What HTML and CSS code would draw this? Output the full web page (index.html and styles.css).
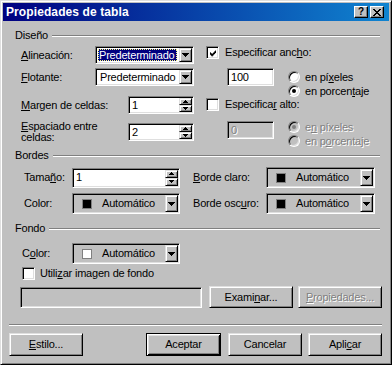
FILE: index.html
```html
<!DOCTYPE html>
<html lang="es">
<head>
<meta charset="utf-8">
<title>Propiedades de tabla</title>
<link rel="stylesheet" href="styles.css">
</head>
<body>
<div class="window">
  <div class="titlebar">
    <span class="title">Propiedades de tabla</span>
    <div class="tb-btns">
      <span class="tbtn help">?</span>
      <span class="tbtn"><svg width="8" height="7" viewBox="0 0 8 7"><path d="M0 0h2v1h1v1h2v-1h1v-1h2v1h-1v1h-1v1h-1v1h1v1h1v1h1v1h-2v-1h-1v-1h-2v1h-1v1h-2v-1h1v-1h1v-1h1v-1h-1v-1h-1v-1h-1z" fill="#000"/></svg></span>
    </div>
  </div>
  <div class="content">
    <div class="ghead"><span>Diseño</span><i class="rule"></i></div>
    <div class="design">
      <div class="lcol">
        <div class="row lrow r1">
          <span class="lbl-a"><u>A</u>lineación:</span>
          <div class="combo sunken w99"><span class="val sel">Predeterminado</span><span class="dd raised"><svg width="7" height="4" viewBox="0 0 7 4"><path d="M0 0H7V1H6V2H5V3H4V4H3V3H2V2H1V1H0Z"/></svg></span></div>
        </div>
        <div class="row lrow r2">
          <span class="lbl-a"><u>F</u>lotante:</span>
          <div class="combo sunken w99"><span class="val">Predeterminado</span><span class="dd raised"><svg width="7" height="4" viewBox="0 0 7 4"><path d="M0 0H7V1H6V2H5V3H4V4H3V3H2V2H1V1H0Z"/></svg></span></div>
        </div>
        <div class="row lrow r3">
          <span class="lbl-b"><u>M</u>argen de celdas:</span>
          <div class="spin sunken w66"><span class="val">1</span><span class="btns"><span class="raised"><svg width="5" height="3" viewBox="0 0 5 3"><path d="M2 0H3V1H4V2H5V3H0V2H1V1H2Z"/></svg></span><span class="raised"><svg width="5" height="3" viewBox="0 0 5 3"><path d="M0 0H5V1H4V2H3V3H2V2H1V1H0Z"/></svg></span></span></div>
        </div>
        <div class="row lrow r4">
          <span class="lbl-b two"><u>E</u>spaciado entre<br>celdas:</span>
          <div class="spin sunken w66"><span class="val">2</span><span class="btns"><span class="raised"><svg width="5" height="3" viewBox="0 0 5 3"><path d="M2 0H3V1H4V2H5V3H0V2H1V1H2Z"/></svg></span><span class="raised"><svg width="5" height="3" viewBox="0 0 5 3"><path d="M0 0H5V1H4V2H3V3H2V2H1V1H0Z"/></svg></span></span></div>
        </div>
      </div>
      <div class="rcol">
        <div class="cbrow cb1">
          <span class="chk sunken"><svg width="7" height="7" viewBox="0 0 7 7"><path d="M0 2h1v1h1v1h1v-1h1v-1h1v-1h1v-1h1v3h-1v1h-1v1h-1v1h-1v1h-1v-1h-1v-1h-1z"/></svg></span>
          <span>Especificar anc<u>h</u>o:</span>
        </div>
        <div class="wblock">
          <div class="numfield sunken">100</div>
          <div class="radios">
            <div class="rrow"><span class="radio"></span><span>en pí<u>x</u>eles</span></div>
            <div class="rrow"><span class="radio on"></span><span>en porcen<u>t</u>aje</span></div>
          </div>
        </div>
        <div class="cbrow">
          <span class="chk sunken"></span>
          <span>Especifica<u>r</u> alto:</span>
        </div>
        <div class="hblock">
          <div class="numfield sunken disabled"><span class="dis">0</span></div>
          <div class="radios r0">
            <div class="rrow"><span class="radio off on"></span><span class="dis">e<u>n</u> píxeles</span></div>
            <div class="rrow"><span class="radio off"></span><span class="dis">en p<u>o</u>rcentaje</span></div>
          </div>
        </div>
      </div>
    </div>

    <div class="ghead g-bordes"><span>Bordes</span><i class="rule"></i></div>
    <div class="borders">
      <div class="row brow b1">
        <span class="blbl">Tama<u>ñ</u>o:</span>
        <div class="spin sunken w108 tall"><span class="val">1</span><span class="btns"><span class="raised"><svg width="5" height="3" viewBox="0 0 5 3"><path d="M2 0H3V1H4V2H5V3H0V2H1V1H2Z"/></svg></span><span class="raised"><svg width="5" height="3" viewBox="0 0 5 3"><path d="M0 0H5V1H4V2H3V3H2V2H1V1H0Z"/></svg></span></span></div>
        <span class="blbl2"><u>B</u>orde claro:</span>
        <div class="combo sunken color w109 tall"><span class="val"><i class="swatch black"></i><span class="ctext">Automático</span></span><span class="dd raised"><svg width="7" height="4" viewBox="0 0 7 4"><path d="M0 0H7V1H6V2H5V3H4V4H3V3H2V2H1V1H0Z"/></svg></span></div>
      </div>
      <div class="row brow b2">
        <span class="blbl">Color:</span>
        <div class="combo sunken color w108 tall"><span class="val"><i class="swatch black"></i><span class="ctext">Automático</span></span><span class="dd raised"><svg width="7" height="4" viewBox="0 0 7 4"><path d="M0 0H7V1H6V2H5V3H4V4H3V3H2V2H1V1H0Z"/></svg></span></div>
        <span class="blbl2">Borde osc<u>u</u>ro:</span>
        <div class="combo sunken color w109 tall"><span class="val"><i class="swatch black"></i><span class="ctext">Automático</span></span><span class="dd raised"><svg width="7" height="4" viewBox="0 0 7 4"><path d="M0 0H7V1H6V2H5V3H4V4H3V3H2V2H1V1H0Z"/></svg></span></div>
      </div>
    </div>

    <div class="ghead g-fondo"><span>Fondo</span><i class="rule"></i></div>
    <div class="fondo">
      <div class="row frow1">
        <span class="flbl">C<u>o</u>lor:</span>
        <div class="combo sunken color w108 tall"><span class="val"><i class="swatch white"></i><span class="ctext">Automático</span></span><span class="dd raised"><svg width="7" height="4" viewBox="0 0 7 4"><path d="M0 0H7V1H6V2H5V3H4V4H3V3H2V2H1V1H0Z"/></svg></span></div>
      </div>
      <div class="row frow2">
        <span class="chk sunken"></span>
        <span>Utili<u>z</u>ar imagen de fondo</span>
      </div>
      <div class="row frow3">
        <div class="pathfield sunken"></div>
        <div class="btn raised b-exam">Exami<u>n</u>ar...</div>
        <div class="btn raised b-prop"><span class="dis"><u>P</u>ropiedades...</span></div>
      </div>
    </div>

    <div class="sep"></div>

    <div class="footer">
      <div class="btn raised fbtn"><span><u>E</u>stilo...</span></div>
      <div class="btn default fbtn b-ok">Aceptar</div>
      <div class="btn raised fbtn b-cancel">Cancelar</div>
      <div class="btn raised fbtn b-apply">Apli<u>c</u>ar</div>
    </div>
  </div>
</div>
</body>
</html>
```

FILE: styles.css
```css
* { box-sizing: border-box; }
html, body { margin: 0; padding: 0; }
body {
  width: 392px;
  height: 365px;
  overflow: hidden;
  background: #c0c0c0;
  font-family: "Liberation Sans", Arial, sans-serif;
  font-size: 11px;
  line-height: 13px;
  letter-spacing: -0.2px;
  color: #000;
}
u { text-decoration: underline; text-underline-offset: 1px; }

.window {
  width: 392px;
  height: 365px;
  background: #c0c0c0;
  border: 1px solid;
  border-color: #dfdfdf #000 #000 #dfdfdf;
  box-shadow: inset 1px 1px #fff, inset -1px -1px #808080;
  padding: 2px;
  display: flex;
  flex-direction: column;
}

.titlebar {
  height: 18px;
  flex: none;
  display: flex;
  align-items: center;
  justify-content: space-between;
  background: linear-gradient(to right, #000080, #1084d0);
  padding: 0 5px 0 3px;
}
.title { color: #fff; font-weight: bold; font-size: 12px; letter-spacing: 0.1px; }
.tb-btns { display: flex; gap: 2px; }
.tbtn {
  width: 14px;
  height: 12px;
  background: #c0c0c0;
  border: 1px solid;
  border-color: #fff #000 #000 #fff;
  box-shadow: inset -1px -1px #808080;
  display: flex;
  align-items: center;
  justify-content: center;
}
.tbtn.help { font-weight: bold; font-size: 10px; line-height: 10px; letter-spacing: 0; }

.content {
  flex: 1;
  padding: 8px 7px 0 6px;
  display: flex;
  flex-direction: column;
}

.ghead {
  display: flex;
  align-items: center;
  height: 13px;
  padding-left: 6px;
  margin-right: 2px;
  flex: none;
}
.rule {
  flex: 1;
  height: 2px;
  border-top: 1px solid #808080;
  border-bottom: 1px solid #fff;
  margin-left: 4px;
}

/* bevels */
.sunken {
  border: 1px solid;
  border-color: #808080 #fff #fff #808080;
  box-shadow: inset 1px 1px #000, inset -1px -1px #dfdfdf;
  background: #fff;
}
.raised {
  background: #c0c0c0;
  border: 1px solid;
  border-color: #dfdfdf #000 #000 #dfdfdf;
  box-shadow: inset 1px 1px #fff, inset -1px -1px #808080;
}

.row { display: flex; align-items: center; }

/* design */
.design {
  display: grid;
  grid-template-columns: 185px 1fr;
  padding-left: 12px;
  height: 101px;
  flex: none;
}
.lcol { display: flex; flex-direction: column; }
.lrow { height: 18px; }
.r1 { margin-top: 4px; }
.r2 { margin-top: 4px; }
.r3 { margin-top: 10px; }
.r4 { margin-top: 7px; height: 22px; }
.lbl-a { width: 74px; }
.lbl-b { width: 107px; }
.lbl-b.two { line-height: 11px; }

.w99 { width: 99px; }
.w66 { width: 66px; }
.w108 { width: 108px; }
.w109 { width: 109px; }

.combo { display: flex; padding: 1px; height: 18px; flex: none; }
.combo.tall { height: 21px; }
.combo .val {
  flex: 1;
  min-width: 0;
  padding-left: 3px;
  display: flex;
  align-items: center;
  white-space: nowrap;
  overflow: hidden;
}
.combo .val.sel {
  margin: 1px 2px 1px 1px;
  padding-left: 1px;
  background: #000080;
  color: #fff;
  outline: 1px dotted #ffff80;
  outline-offset: -1px;
}
.dd {
  width: 13px;
  flex: none;
  display: flex;
  align-items: center;
  justify-content: center;
}
.dd svg { fill: #000; }

.combo.color { background: #c0c0c0; }
.combo.color .val { padding-left: 8px; }
.swatch {
  width: 10px;
  height: 10px;
  flex: none;
  border: 1px solid #808080;
}
.swatch.black { background: #000; }
.swatch.white { background: #fff; }
.ctext { margin-left: 10px; }

.spin { display: flex; padding: 1px; height: 18px; flex: none; }
.spin.tall { height: 20px; }
.spin .val { flex: 1; padding-left: 2px; display: flex; align-items: center; }
.spin .btns { width: 13px; display: flex; flex-direction: column; }
.spin .btns span { flex: 1; display: flex; align-items: center; justify-content: center; }
.spin .btns svg { fill: #000; }

/* right column */
.rcol { display: flex; flex-direction: column; }
.cbrow { display: flex; align-items: center; height: 13px; gap: 6px; }
.cb1 { margin-top: 4px; }
.chk {
  width: 13px;
  height: 13px;
  flex: none;
  padding: 2px;
  display: flex;
}
.chk svg { fill: #000; margin: 1px 0 0 1px; }

.wblock { margin-top: 9px; height: 30px; display: flex; align-items: flex-start; }
.hblock { margin-top: 10px; display: flex; align-items: flex-start; }
.numfield {
  width: 47px;
  height: 18px;
  margin-left: 21px;
  padding: 1px 1px 1px 3px;
  display: flex;
  align-items: center;
  flex: none;
}
.numfield.disabled { background: #c0c0c0; }
.radios { margin-left: 14px; margin-top: 3px; display: flex; flex-direction: column; gap: 2px; }
.radios.r0 { margin-top: 0; }
.rrow { display: flex; align-items: center; gap: 5px; height: 12px; line-height: 12px; }
.radio {
  width: 12px;
  height: 12px;
  flex: none;
  border-radius: 50%;
  border: 1px solid;
  border-color: #808080 #fff #fff #808080;
  box-shadow: inset 1px 1px #000, inset -1px -1px #dfdfdf;
  background: #fff;
  position: relative;
}
.radio.on::after {
  content: "";
  position: absolute;
  left: 3px;
  top: 3px;
  width: 4px;
  height: 4px;
  border-radius: 50%;
  background: #000;
}
.radio.off { background: #c0c0c0; }
.radio.off.on::after { background: #808080; }

.dis { color: #808080; text-shadow: 1px 1px 0 #fff; }

/* borders */
.g-bordes { margin-top: 6px; }
.borders { padding-left: 15px; display: flex; flex-direction: column; flex: none; }
.brow { height: 21px; }
.b1 { margin-top: 5px; }
.b2 { margin-top: 5px; }
.blbl { width: 48px; }
.blbl2 { margin-left: 13px; width: 73px; }

/* fondo */
.g-fondo { margin-top: 8px; }
.fondo { display: flex; flex-direction: column; flex: none; }
.frow1 { margin-top: 8px; height: 21px; padding-left: 13px; }
.flbl { width: 50px; }
.frow2 { margin-top: 3px; height: 13px; padding-left: 13px; gap: 5px; }
.frow3 { margin-top: 6px; height: 22px; padding-left: 11px; }
.pathfield { width: 182px; height: 21px; background: #c0c0c0; }

.btn {
  height: 22px;
  display: flex;
  align-items: center;
  justify-content: center;
  flex: none;
}
.b-exam { width: 84px; margin-left: 7px; }
.b-prop { width: 84px; margin-left: 5px; }

.sep {
  margin-top: 16px;
  height: 2px;
  border-top: 1px solid #808080;
  border-bottom: 1px solid #fff;
  flex: none;
}

.footer { margin-top: 7px; display: flex; }
.fbtn { width: 74px; height: 23px; }
.default {
  background: #c0c0c0;
  border: 1px solid #000;
  box-shadow: inset 1px 1px #fff, inset -1px -1px #000, inset 2px 2px #dfdfdf, inset -2px -2px #808080;
}
.b-ok { width: 75px; margin-left: 63px; }
.b-cancel { margin-left: 7px; }
.b-apply { margin-left: 6px; }
```
